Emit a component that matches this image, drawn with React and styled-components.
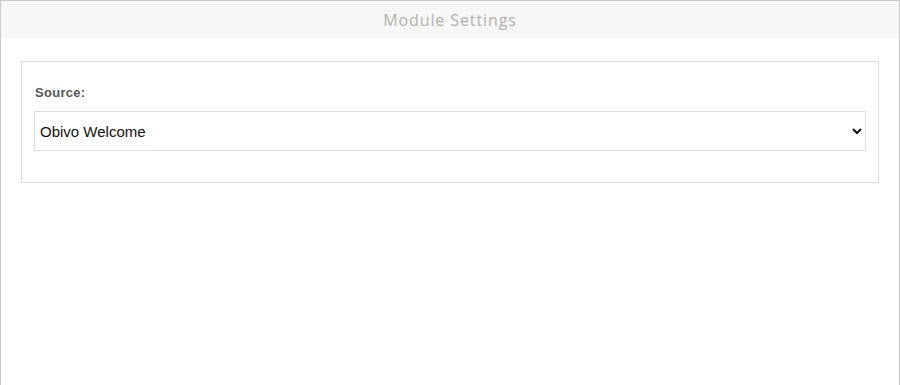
import React from "react";
import styled, { createGlobalStyle } from "styled-components";

const GlobalStyle = createGlobalStyle`
  html, body {
    margin: 0;
    padding: 0;
    background: #ffffff;
  }
  body {
    font-family: "Liberation Sans", Arial, sans-serif;
  }
`;

const Frame = styled.div`
  box-sizing: border-box;
  width: 900px;
  height: 385px;
  border: 1px solid #c8c8c8;
  border-bottom: none;
  background: #fff;
  display: flex;
  flex-direction: column;
`;

const Header = styled.div`
  height: 37px;
  background: #f7f7f7;
  display: flex;
  align-items: center;
  justify-content: center;
  font-family: "Open Sans", "Noto Sans", sans-serif;
  font-size: 16px;
  color: #b4afaa;
  letter-spacing: 0.9px;
`;

const Body = styled.div`
  padding: 23px 20px 0 20px;
`;

const Card = styled.div`
  box-sizing: border-box;
  border: 1px solid #dddddd;
  padding: 20px 12px 31px 12px;
  display: flex;
  flex-direction: column;
`;

const Label = styled.label`
  font-family: "Liberation Sans", Arial, sans-serif;
  font-size: 13px;
  font-weight: bold;
  color: #555555;
  margin: 3px 0 0 1px;
  line-height: 16px;
  letter-spacing: 0.3px;
`;

const Select = styled.select`
  box-sizing: border-box;
  margin-top: 10px;
  width: 100%;
  height: 40px;
  border: 1px solid #dddddd;
  border-radius: 0;
  background: #fff;
  padding: 0 6px 0 1px;
  font-family: "Liberation Sans", Arial, sans-serif;
  font-size: 15px;
  color: #111;
  outline: none;
`;

export default function App() {
  return (
    <>
      <GlobalStyle />
      <Frame>
        <Header>Module Settings</Header>
        <Body>
          <Card>
            <Label htmlFor="source">Source:</Label>
            <Select id="source" defaultValue="welcome">
              <option value="welcome">Obivo Welcome</option>
            </Select>
          </Card>
        </Body>
      </Frame>
    </>
  );
}
